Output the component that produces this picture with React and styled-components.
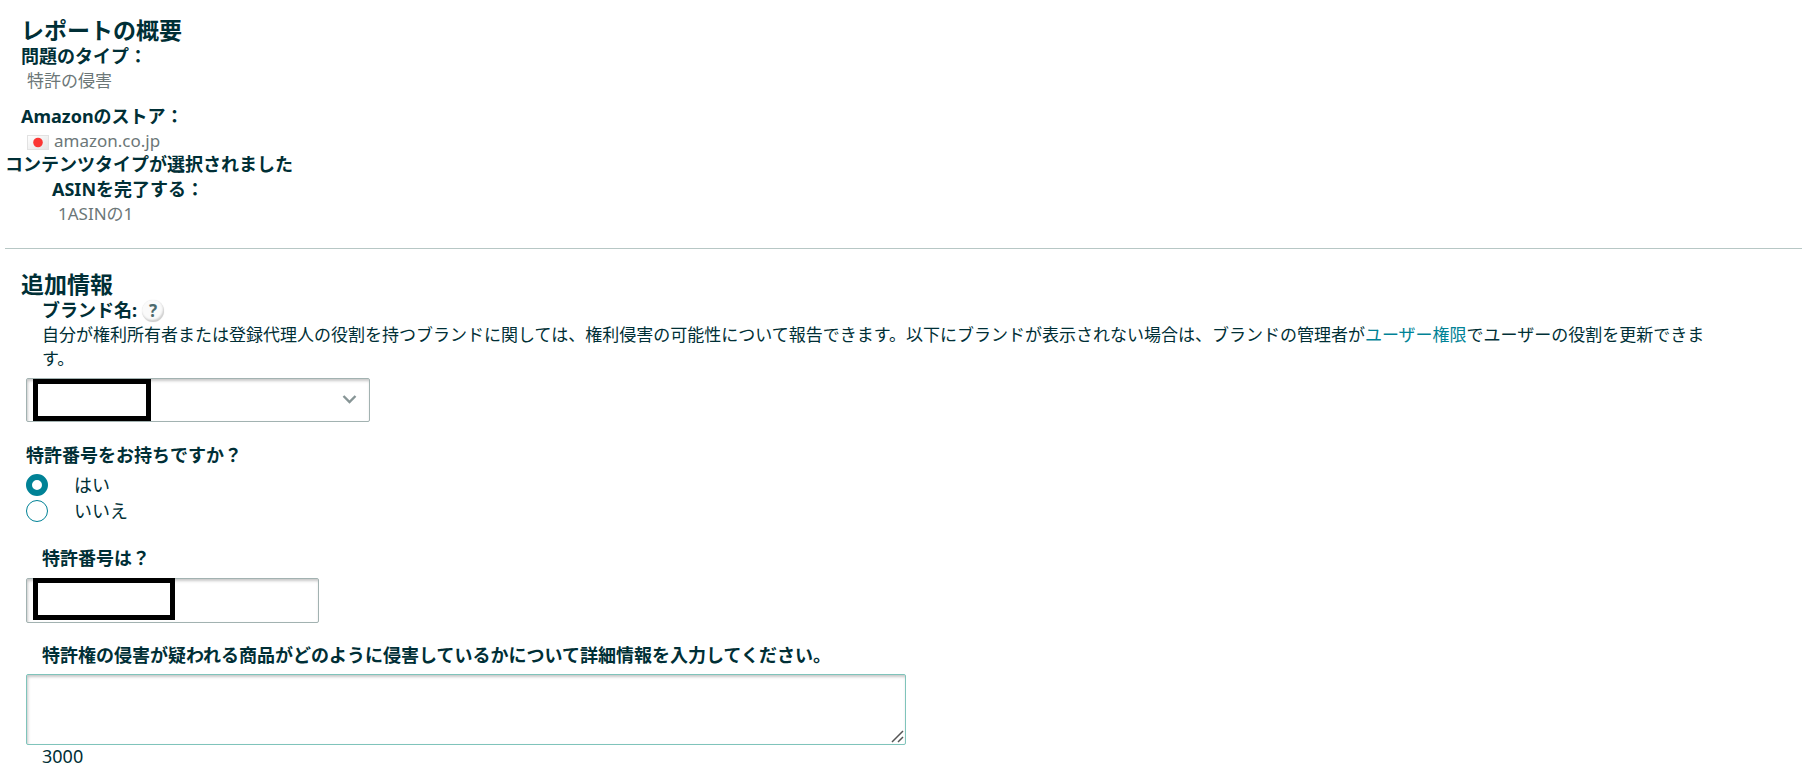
import React, { useState } from "react";
import styled, { createGlobalStyle } from "styled-components";

const GlobalStyle = createGlobalStyle`
  * {
    box-sizing: border-box;
  }

  body {
    margin: 0;
    background: #fff;
    color: #002f36;
    font-family: "Noto Sans", "Noto Sans CJK JP", sans-serif;
    font-size: 18px;
    line-height: 24px;
  }

  input,
  select,
  textarea,
  button {
    font: inherit;
    color: inherit;
  }
`;

const Page = styled.main`
  padding: 16px 0 10px 5px;
`;

const Section = styled.section`
  display: flex;
  flex-direction: column;
`;

const Title = styled.h2`
  margin: 0;
  padding-left: 16px;
  font-size: 23px;
  font-weight: 700;
  line-height: 28px;
`;

const Term = styled.div`
  padding-left: ${(props) => props.$indent || 0}px;
  font-weight: 700;
  line-height: 25px;
`;

const Value = styled.div`
  display: flex;
  align-items: center;
  gap: 5px;
  padding-left: ${(props) => props.$indent || 0}px;
  margin-bottom: ${(props) => props.$after || 0}px;
  color: #6c7778;
  font-size: 17px;
  line-height: 23px;
`;

const Flag = styled.svg`
  width: 22px;
  height: 15px;
  margin-top: 3px;
`;

const Divider = styled.hr`
  width: 100%;
  height: 1px;
  margin: 23px 0 21px;
  border: 0;
  background: #b7c7c5;
`;

const Form = styled.form`
  display: flex;
  flex-direction: column;
  align-items: flex-start;
`;

const LabelRow = styled.div`
  display: flex;
  align-items: center;
  gap: 5px;
  padding-left: 37px;
  margin-bottom: ${(props) => props.$after || 0}px;
`;

const Label = styled.label`
  font-weight: 700;
  line-height: 25px;
`;

const HelpButton = styled.button`
  width: 22px;
  height: 22px;
  padding: 0;
  border: 0;
  border-radius: 50%;
  background: #fafafa;
  box-shadow: inset -1px -2px 2px #cdcdcd, 0 0 1px #ddd;
  color: #4c6a6d;
  font-size: 17px;
  font-weight: 700;
  line-height: 22px;
`;

const Description = styled.p`
  margin: 0 0 7px;
  padding: 0 90px 0 37px;
  font-size: 17px;
`;

const TextLink = styled.a`
  color: #008296;
  text-decoration: none;
`;

const Control = styled.div`
  position: relative;
  width: ${(props) => props.$width}px;
  max-width: calc(100% - 42px);
  margin: 0 0 ${(props) => props.$after || 0}px 21px;
`;

const fieldStyles = `
  display: block;
  width: 100%;
  margin: 0;
  padding: 0 10px;
  border: 1px solid #a2b2b1;
  border-radius: 2px;
  background: #fff;
  box-shadow: inset 1px 2px 3px rgba(0, 0, 0, 0.22);
  outline: 0;
`;

const Select = styled.select`
  ${fieldStyles}
  height: 44px;
  appearance: none;
`;

const TextInput = styled.input`
  ${fieldStyles}
  height: 45px;
`;

const TextArea = styled.textarea`
  ${fieldStyles}
  height: 71px;
  padding: 8px 10px;
  border-color: #7fc4bb;
  resize: vertical;

  &::-webkit-resizer {
    background: transparent;
  }
`;

const Grip = styled.svg`
  position: absolute;
  right: 2px;
  bottom: 2px;
  width: 13px;
  height: 13px;
  pointer-events: none;
`;

const Chevron = styled.svg`
  position: absolute;
  top: 16px;
  right: 13px;
  width: 15px;
  height: 11px;
  pointer-events: none;
`;

const Mask = styled.span`
  position: absolute;
  top: ${(props) => props.$top}px;
  left: 7px;
  width: ${(props) => props.$width}px;
  height: 42px;
  border: 5px solid #000;
  background: #fff;
  pointer-events: none;
`;

const RadioGroup = styled.fieldset`
  display: flex;
  flex-direction: column;
  gap: 2px;
  min-width: 0;
  margin: 0 0 23px;
  padding: 0 0 0 21px;
  border: 0;
`;

const Legend = styled.legend`
  padding: 0;
  margin-bottom: 6px;
  font-weight: 700;
`;

const RadioLabel = styled.label`
  display: flex;
  align-items: center;
  gap: 26px;
`;

const Radio = styled.input`
  appearance: none;
  width: 22px;
  height: 22px;
  margin: 0;
  border: 1px solid #008296;
  border-radius: 50%;
  background: #fff;

  &:checked {
    border-width: 6px;
  }
`;

const Counter = styled.div`
  padding-left: 37px;
  line-height: 23px;
`;

const JapanFlag = () => (
  <Flag viewBox="0 0 22 15" aria-hidden="true">
    <defs>
      <linearGradient id="cloth" x1="0" y1="0" x2="1" y2="1">
        <stop offset="0" stopColor="#fff" />
        <stop offset="1" stopColor="#e4e4e4" />
      </linearGradient>
    </defs>
    <rect x="0.5" y="0.5" width="21" height="14" fill="url(#cloth)" stroke="#e2e2e2" />
    <circle cx="11" cy="7.5" r="4.8" fill="#fb3634" />
  </Flag>
);

export default function App() {
  const [hasPatent, setHasPatent] = useState("yes");
  const [details, setDetails] = useState("");

  return (
    <Page>
      <GlobalStyle />
      <Section>
        <Title>レポートの概要</Title>
        <Term $indent={16}>問題のタイプ：</Term>
        <Value $indent={22} $after={12}>
          特許の侵害
        </Value>
        <Term $indent={16}>Amazonのストア：</Term>
        <Value $indent={22}>
          <JapanFlag />
          amazon.co.jp
        </Value>
        <Term>コンテンツタイプが選択されました</Term>
        <Term $indent={47}>ASINを完了する：</Term>
        <Value $indent={53}>1ASINの1</Value>
      </Section>

      <Divider />

      <Section>
        <Title>追加情報</Title>
        <Form>
          <LabelRow>
            <Label htmlFor="brand">ブランド名:</Label>
            <HelpButton type="button" aria-label="ヘルプ">
              ?
            </HelpButton>
          </LabelRow>
          <Description>
            自分が権利所有者または登録代理人の役割を持つブランドに関しては、権利侵害の可能性について報告できます。以下にブランドが表示されない場合は、ブランドの管理者が
            <TextLink href="#permissions">ユーザー権限</TextLink>
            でユーザーの役割を更新できます。
          </Description>
          <Control $width={344} $after={21}>
            <Select id="brand">
              <option value="" />
            </Select>
            <Mask $top={1} $width={118} />
            <Chevron viewBox="0 0 15 11" aria-hidden="true">
              <path d="M1.5 2 L7.5 8 L13.5 2" fill="none" stroke="#879596" strokeWidth="2.4" />
            </Chevron>
          </Control>

          <RadioGroup>
            <Legend>特許番号をお持ちですか？</Legend>
            <RadioLabel>
              <Radio
                type="radio"
                name="patent"
                checked={hasPatent === "yes"}
                onChange={() => setHasPatent("yes")}
              />
              はい
            </RadioLabel>
            <RadioLabel>
              <Radio
                type="radio"
                name="patent"
                checked={hasPatent === "no"}
                onChange={() => setHasPatent("no")}
              />
              いいえ
            </RadioLabel>
          </RadioGroup>

          <LabelRow $after={7}>
            <Label htmlFor="number">特許番号は？</Label>
          </LabelRow>
          <Control $width={293} $after={20}>
            <TextInput id="number" type="text" />
            <Mask $top={0} $width={142} />
          </Control>

          <LabelRow $after={6}>
            <Label htmlFor="details">
              特許権の侵害が疑われる商品がどのように侵害しているかについて詳細情報を入力してください。
            </Label>
          </LabelRow>
          <Control $width={880}>
            <TextArea
              id="details"
              maxLength={3000}
              value={details}
              onChange={(e) => setDetails(e.target.value)}
            />
            <Grip viewBox="0 0 13 13" aria-hidden="true">
              <path d="M1 12 L12 1 M7 12 L12 7" fill="none" stroke="#555" strokeWidth="1.5" />
            </Grip>
          </Control>
          <Counter>{3000 - details.length}</Counter>
        </Form>
      </Section>
    </Page>
  );
}
